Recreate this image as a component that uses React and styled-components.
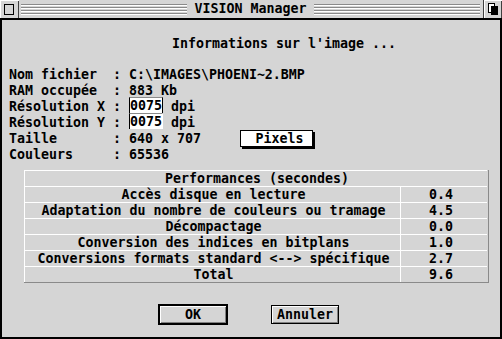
import React from "react";
import styled, { createGlobalStyle } from "styled-components";

const Global = createGlobalStyle`
  body {
    margin: 0;
    background: #d5d5d5;
  }
`;

// whole window
const Window = styled.div`
  width: 502px;
  height: 339px;
  display: flex;
  flex-direction: column;
  background: #d5d5d5;
  font-family: "DejaVu Sans Mono", "Liberation Mono", monospace;
  font-weight: bold;
  font-size: 13.29px;
  color: #000;
  box-sizing: border-box;
`;

const TitleBar = styled.div`
  height: 20px;
  display: flex;
  align-items: stretch;
  box-sizing: border-box;
  border-bottom: 2px solid #000;
  background: #d5d5d5;
`;

const BoxGadget = styled.div`
  width: 19px;
  box-sizing: border-box;
  display: flex;
  align-items: center;
  justify-content: center;
  box-shadow: inset 1px 1px 0 #fff, inset -1px 0 0 #404040;
  border-left: ${(p) => (p.$right ? "1px solid #404040" : "none")};
`;

const CloseSquare = styled.div`
  width: 8px;
  height: 9px;
  border: 1px solid #000;
  margin-right: 2px;
`;

const Stripes = styled.div`
  flex: 1;
  align-self: center;
  height: 11px;
  margin: ${(p) => (p.$right ? "0 3px 0 0" : "0 0 0 2px")};
  background: repeating-linear-gradient(
    to bottom,
    #8a8a8a 0 1px,
    #ffffff 1px 2px,
    transparent 2px 3px
  );
`;

const Title = styled.div`
  padding: 0 8px;
  line-height: 18px;
  white-space: pre;
`;

const Content = styled.div`
  flex: 1;
  display: flex;
  flex-direction: column;
  border: 2px solid #000;
  border-top: none;
  padding-left: 7px;
`;

const Heading = styled.div`
  margin-top: 16px;
  padding-left: 163px;
  line-height: 16px;
  white-space: pre;
`;

const InfoList = styled.div`
  margin-top: 15px;
  display: flex;
  flex-direction: column;
`;

const InfoRow = styled.div`
  height: 16px;
  line-height: 16px;
  display: flex;
  align-items: flex-start;
  white-space: pre;
`;

const Field = styled.span`
  height: 16px;
  margin-top: -2px;
  background: #fff;
  border-left: 1px solid #000;
  border-top: 1px solid #8a8a8a;
  border-right: ${(p) => (p.$cursor ? "1px solid #000" : "1px solid transparent")};
  box-sizing: border-box;
  line-height: 15px;
`;

const SmallButton = styled.div`
  width: 73px;
  height: 17px;
  margin-left: 39px;
  margin-top: -1px;
  box-sizing: border-box;
  border: 1px solid #000;
  background: #fff;
  box-shadow: 2px 2px 0 #000;
  line-height: 15px;
  text-align: center;
  padding-left: 6px;
`;

const Table = styled.div`
  margin-top: 7px;
  margin-left: 15px;
  width: 464px;
  display: grid;
  grid-template-columns: 376px 87px;
  border-right: 1px solid #8a8a8a;
  border-bottom: 1px solid #8a8a8a;
`;

const Cell = styled.div`
  height: 16px;
  box-sizing: border-box;
  border-top: 1px solid #fff;
  border-left: 1px solid #fff;
  line-height: 15px;
  text-align: center;
  white-space: pre;
  grid-column: ${(p) => (p.$span ? "1 / span 2" : "auto")};
  padding-left: ${(p) => (p.$value ? "0" : "2px")};
  padding-right: ${(p) => (p.$value ? "6px" : "0")};
`;

const ButtonRow = styled.div`
  margin-top: 21px;
  padding-left: 149px;
  display: flex;
  gap: 43px;
  align-items: flex-start;
`;

const Button = styled.div`
  width: ${(p) => (p.$default ? "70px" : "68px")};
  height: ${(p) => (p.$default ? "21px" : "19px")};
  margin-top: ${(p) => (p.$default ? "0" : "1px")};
  box-sizing: border-box;
  border: ${(p) => (p.$default ? "2px" : "1px")} solid #000;
  background: #d5d5d5;
  box-shadow: inset 1px 1px 0 #fff, inset -1px -1px 0 #808080;
  text-align: center;
  line-height: ${(p) => (p.$default ? "17px" : "17px")};
`;

const perf = [
  ["Accès disque en lecture", "0.4"],
  ["Adaptation du nombre de couleurs ou tramage", "4.5"],
  ["Décompactage", "0.0"],
  ["Conversion des indices en bitplans", "1.0"],
  ["Conversions formats standard <--> spécifique", "2.7"],
  ["Total", "9.6"],
];

const App = () => {
  return (
    <Window>
      <Global />
      <TitleBar>
        <BoxGadget>
          <CloseSquare />
        </BoxGadget>
        <Stripes />
        <Title>VISION Manager</Title>
        <Stripes $right />
        <BoxGadget $right>
          <svg width="12" height="14" viewBox="0 0 12 14">
            <rect x="4" y="4" width="7" height="9" fill="#000" />
            <rect x="1.5" y="1.5" width="6" height="9" fill="#fff" stroke="#000" />
            <rect x="4" y="4" width="3" height="6" fill="#000" />
          </svg>
        </BoxGadget>
      </TitleBar>

      <Content>
        <Heading>Informations sur l'image ...</Heading>

        <InfoList>
          <InfoRow>Nom fichier  : C:\IMAGES\PHOENI~2.BMP</InfoRow>
          <InfoRow>RAM occupée  : 883 Kb</InfoRow>
          <InfoRow>
            Résolution X : <Field $cursor>0075</Field> dpi
          </InfoRow>
          <InfoRow>
            Résolution Y : <Field>0075</Field> dpi
          </InfoRow>
          <InfoRow>
            Taille       : 640 x 707
            <SmallButton>Pixels</SmallButton>
          </InfoRow>
          <InfoRow>Couleurs     : 65536</InfoRow>
        </InfoList>

        {/* tableau des performances */}
        <Table>
          <Cell $span>Performances (secondes)</Cell>
          {perf.map(([label, value]) => (
            <React.Fragment key={label}>
              <Cell>{label}</Cell>
              <Cell $value>{value}</Cell>
            </React.Fragment>
          ))}
        </Table>

        <ButtonRow>
          <Button $default>OK</Button>
          <Button>Annuler</Button>
        </ButtonRow>
      </Content>
    </Window>
  );
};

export default App;
